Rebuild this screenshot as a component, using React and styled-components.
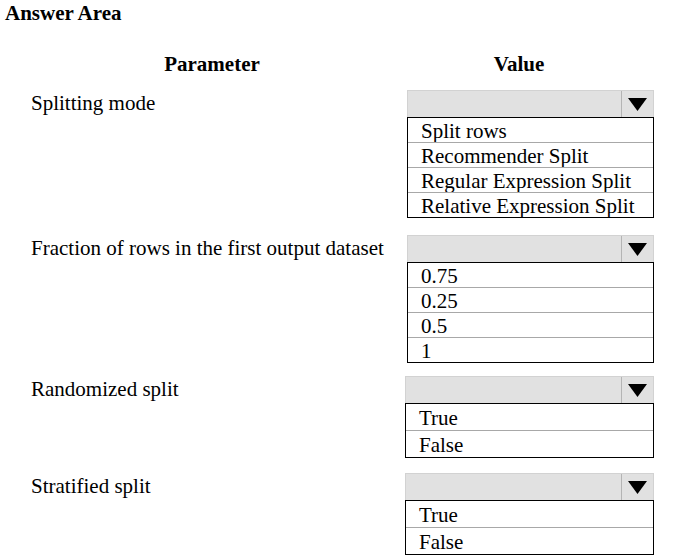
import React from 'react';
import styled, { createGlobalStyle } from 'styled-components';

const GlobalStyle = createGlobalStyle`
  body {
    margin: 0;
    background: #fff;
    color: #000;
    font-family: "Liberation Serif", "Times New Roman", serif;
  }
`;

const Page = styled.div`
  width: 679px;
  height: 560px;
  padding-top: 1px;
  box-sizing: border-box;
`;

const Title = styled.div`
  font-weight: bold;
  font-size: 21px;
  line-height: 24px;
  padding-left: 5px;
`;

const Table = styled.div`
  display: grid;
  grid-template-columns: 375px 248px;
  padding-left: 31px;
  margin-top: 27px;
  row-gap: 13px;
`;

const HeaderCell = styled.div`
  font-weight: bold;
  font-size: 21px;
  line-height: 24px;
  text-align: center;
  padding-right: ${(p) => p.$shift || 0}px;
  margin-bottom: 1px;
`;

const Label = styled.div`
  font-size: 21px;
  line-height: 27px;
  margin-top: ${(p) => p.$top || 0}px;
`;

const Dropdown = styled.div`
  display: flex;
  flex-direction: column;
  margin-top: ${(p) => p.$top || 0}px;
  margin-left: ${(p) => p.$left || 0}px;
`;

const Bar = styled.div`
  display: flex;
  height: 27px;
  box-sizing: border-box;
  background: #e1e1e1;
  border: 1px solid #d2d2d2;
  border-bottom: none;
`;

const BarField = styled.div`
  flex: 1;
`;

const ArrowButton = styled.div`
  width: 31px;
  display: flex;
  align-items: center;
  justify-content: center;
  border-left: 1px solid #b4b4b4;
`;

const List = styled.div`
  border: 1px solid #000;
  background: #fff;
`;

const Option = styled.div`
  height: ${(p) => p.$h}px;
  line-height: ${(p) => p.$h + 2}px;
  font-size: 21px;
  padding-left: 13px;
  white-space: nowrap;
  overflow: hidden;
  & + & {
    border-top: 1px solid #a8a8a8;
  }
`;

const Arrow = () => (
  <svg width="19" height="13" viewBox="0 0 19 13">
    <polygon points="0,0 19,0 9.5,13" fill="#000" />
  </svg>
);

const rows = [
  {
    label: 'Splitting mode',
    options: ['Split rows', 'Recommender Split', 'Regular Expression Split', 'Relative Expression Split'],
    h: 24,
    top: 0,
    left: 1,
  },
  {
    label: 'Fraction of rows in the first output dataset',
    options: ['0.75', '0.25', '0.5', '1'],
    h: 24,
    top: 4,
    left: 1,
  },
  {
    label: 'Randomized split',
    options: ['True', 'False'],
    h: 26,
    top: 0,
    left: -1,
  },
  {
    label: 'Stratified split',
    options: ['True', 'False'],
    h: 26,
    top: 2,
    left: -1,
  },
];

export default function App() {
  return (
    <Page>
      <GlobalStyle />
      <Title>Answer Area</Title>
      <Table>
        <HeaderCell $shift={13}>Parameter</HeaderCell>
        <HeaderCell $shift={22}>Value</HeaderCell>
        {rows.map((r) => (
          <React.Fragment key={r.label}>
            <Label $top={r.top}>{r.label}</Label>
            <Dropdown $top={r.top} $left={r.left}>
              <Bar>
                <BarField />
                <ArrowButton>
                  <Arrow />
                </ArrowButton>
              </Bar>
              <List>
                {r.options.map((o) => (
                  <Option key={o} $h={r.h}>
                    {o}
                  </Option>
                ))}
              </List>
            </Dropdown>
          </React.Fragment>
        ))}
      </Table>
    </Page>
  );
}
